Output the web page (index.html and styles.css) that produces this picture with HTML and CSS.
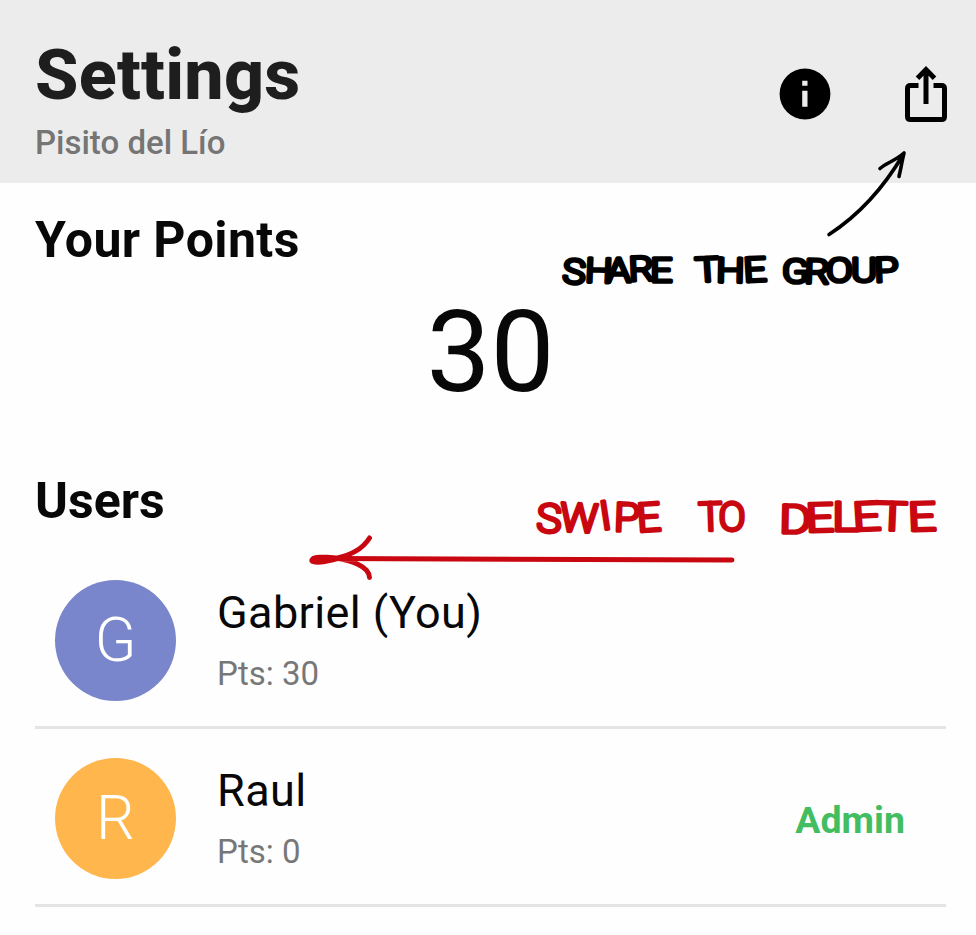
FILE: index.html
```html
<!DOCTYPE html>
<html lang="en">
<head>
<meta charset="utf-8">
<title>Settings</title>
<link rel="stylesheet" href="styles.css">
</head>
<body>
<div class="screen">
  <header class="header">
    <div class="heading">
      <h1 class="title">Settings</h1>
      <p class="subtitle">Pisito del Lío</p>
    </div>
    <div class="actions">
      <svg class="icon-info" viewBox="0 0 52 52" aria-label="Info">
        <circle cx="26" cy="26" r="25.4"/>
        <path class="cut" d="M23.200 12.800h5.300v5h-5.300zM23.200 22.800h5.300v16h-5.300z"/>
      </svg>
      <svg class="icon-share" viewBox="0 0 42 58" aria-label="Share">
        <path d="M13.500 20.500H5.500q-3 0-3 3v28q0 3 3 3h31q3 0 3-3v-28q0-3-3-3h-8M21 39V5M12.500 13.200 21 4.500l8.500 8.700"/>
      </svg>
    </div>
  </header>
  <main class="content">
    <h2 class="section-title points-title">Your Points</h2>
    <div class="points">30</div>
    <h2 class="section-title users-title">Users</h2>
    <ul class="users">
      <li class="user">
        <div class="avatar indigo">G</div>
        <div class="info">
          <div class="name">Gabriel (You)</div>
          <div class="pts">Pts: 30</div>
        </div>
      </li>
      <li class="user">
        <div class="avatar orange">R</div>
        <div class="info">
          <div class="name">Raul</div>
          <div class="pts">Pts: 0</div>
        </div>
        <div class="role">Admin</div>
      </li>
    </ul>
  </main>
  <svg class="notes" viewBox="0 0 976 935">
    <g class="note-black">
      <path class="line" d="M829 234.500Q873 206 903.500 154M880 168.500C886 163 895 161 904 153C902 161 901 168 899 176.500"/>
      <text class="hand" transform="translate(562 0) scale(1.14 1)" y="283 282 282 281 282" x="0 20 39 59 77.500" rotate="3 2 0 -2 0">SHARE</text>
      <text class="hand" transform="translate(696 0) scale(1.18 1)" y="282 282 282" x="0 17 41" rotate="-3 1 -3">THE</text>
      <text class="hand" transform="translate(782 0) scale(1.16 1)" y="283 283 282 282 282" x="0 19 38 59.500 80" rotate="0 2 0 0 -2">GROUP</text>
    </g>
    <g class="note-red">
      <path class="line" d="M732 560L333 558.500M369.500 538C362 550 350 555 336 558.500C350 560 369 566 369.500 577.500"/>
      <path class="fill" d="M337 555.800C328 554.500 316 554.500 312 556.200Q307 560 311 563.500C320 566.500 330 563 338 561L352 560.800V556Z"/>
      <text class="hand" transform="translate(536 0) scale(1.06 1)" y="532 531 530 531 532" x="0 22 62 73 96" rotate="2 3 -8 2 -4">SWIPE</text>
      <text class="hand" y="531 531" x="699 718.500" rotate="-2 0">TO</text>
      <text class="hand" transform="translate(779 0) scale(1.24 1)" y="533 532 531 531 530 531" x="0 22 43 60 79 104.500" rotate="1 -2 0 -3 2 -2">DELETE</text>
    </g>
  </svg>
</div>
</body>
</html>
```
FILE: styles.css
```css
* { box-sizing: border-box; margin: 0; padding: 0; }

body {
  font-family: Roboto, "Liberation Sans", sans-serif;
  background: #fefefe;
  color: #080808;
}

.screen {
  position: relative;
  width: 976px;
  height: 935px;
  overflow: hidden;
}

.header {
  display: flex;
  justify-content: space-between;
  height: 183px;
  padding: 35px 29px 0 35px;
  background: #ececec;
}

.title {
  font-size: 70px;
  line-height: 80px;
  font-weight: 800;
  letter-spacing: 0.25px;
  color: #1e1e1e;
}

.subtitle {
  margin-top: 8px;
  font-size: 33px;
  line-height: 40px;
  color: #757575;
  font-weight: 500;
}

.actions {
  display: flex;
  align-items: flex-start;
  gap: 74px;
  padding-top: 30px;
}

.icon-info { width: 52px; height: 52px; margin-top: 2.500px; }
.icon-info .cut { fill: #ececec; }
.icon-share { width: 42px; height: 58px; fill: none; stroke: #000; stroke-width: 5; }

.content { padding: 27px 30px 0 35px; }

.section-title {
  font-size: 50px;
  line-height: 60px;
  font-weight: 700;
}

.points-title { letter-spacing: 0.4px; }

.points {
  margin-top: 17px;
  font-size: 114px;
  line-height: 130px;
  text-align: center;
}

.users-title { margin-top: 54px; }

.users { list-style: none; margin-top: 20px; }

.user {
  display: flex;
  align-items: center;
  height: 178px;
  padding: 3px 41px 0 20px;
  border-bottom: 3px solid #e4e4e4;
}

.avatar {
  width: 121px;
  height: 121px;
  border-radius: 50%;
  font-size: 61px;
  line-height: 121px;
  font-weight: 300;
  text-align: center;
  color: #fff;
}

.indigo { background: #7986cb; }
.orange { background: #ffb74d; }

.info { flex: 1; margin: -3px 0 0 41px; }
.name { font-size: 45px; line-height: 60px; letter-spacing: 0.4px; }
.pts { font-size: 33px; line-height: 40px; margin-top: 11px; color: #777; }
.role { font-size: 37.500px; font-weight: 700; color: #42bd61; margin-top: 4px; }

.notes {
  position: absolute;
  inset: 0;
  width: 976px;
  height: 935px;
  pointer-events: none;
}

.line { fill: none; stroke-linecap: round; stroke-linejoin: round; }
.hand { font-weight: 300; stroke-linecap: round; stroke-linejoin: round; }
.note-black { fill: #000; stroke: #000; }
.note-black .line { stroke-width: 3.6; }
.note-black .hand { font-size: 34px; stroke-width: 3.6; }
.note-red { fill: #c90710; stroke: #c90710; }
.note-red .line { stroke-width: 5; }
.note-red .hand { font-size: 40px; stroke-width: 3.3; }
.note-red .fill { stroke: none; }
```
